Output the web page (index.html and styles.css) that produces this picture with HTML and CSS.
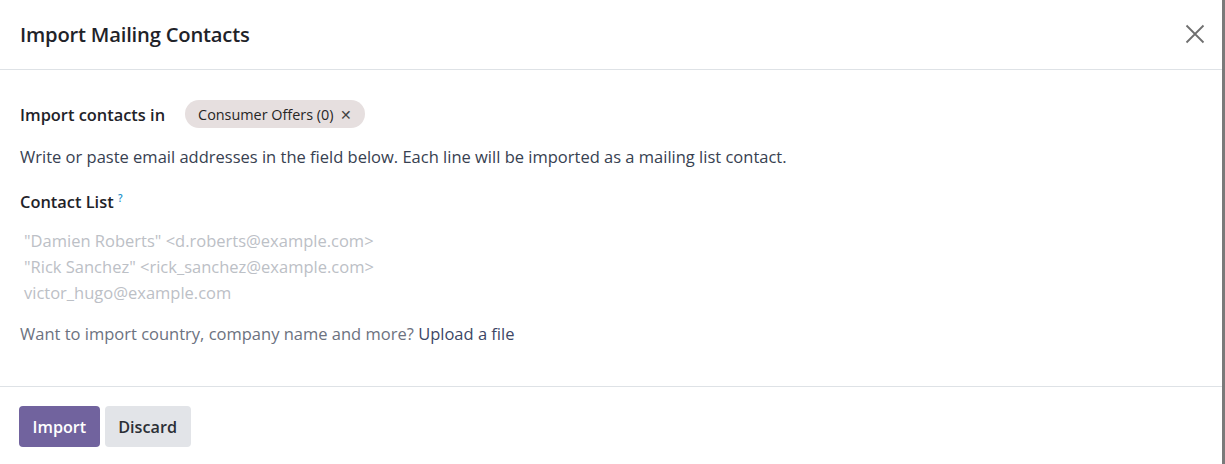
FILE: index.html
```html
<!DOCTYPE html>
<html lang="en">
<head>
<meta charset="utf-8">
<title>Import Mailing Contacts</title>
<link rel="stylesheet" href="styles.css">
</head>
<body>
<div class="modal">
  <header class="modal-header">
    <h4 class="modal-title">Import Mailing Contacts</h4>
    <button class="btn-close" aria-label="Close">
      <svg width="20" height="20" viewBox="0 0 20 20"><path d="M1.5 1.5L18.5 18.5M18.5 1.5L1.5 18.5" stroke="#6f6f6f" stroke-width="1.8" fill="none"/></svg>
    </button>
  </header>
  <main class="modal-body">
    <div class="row-in">
      <span class="label">Import contacts in</span>
      <span class="tag">Consumer Offers (0) <span class="tag-x">✕</span></span>
    </div>
    <p class="desc">Write or paste email addresses in the field below. Each line will be imported as a mailing list contact.</p>
    <div class="field-label">Contact List <sup class="help">?</sup></div>
    <div class="textarea">
      <div>"Damien Roberts" &lt;d.roberts@example.com&gt;</div>
      <div>"Rick Sanchez" &lt;rick_sanchez@example.com&gt;</div>
      <div>victor_hugo@example.com</div>
    </div>
    <p class="more">Want to import country, company name and more? <a class="link" href="#">Upload a file</a></p>
  </main>
  <footer class="modal-footer">
    <button class="btn btn-primary">Import</button>
    <button class="btn btn-secondary">Discard</button>
  </footer>
</div>
</body>
</html>
```
FILE: styles.css
```css
html, body {
  margin: 0;
  padding: 0;
  background: #fff;
}
body {
  font-family: "Open Sans", "Noto Sans", sans-serif;
  font-size: 16.5px;
  color: #374151;
  overflow: hidden;
}
.modal {
  width: 1225px;
  height: 480px;
  border-right: 3px solid #7a7a7a;
  box-sizing: border-box;
  background: #fff;
}
.modal-header {
  height: 70px;
  box-sizing: border-box;
  border-bottom: 1px solid #dee2e6;
  display: flex;
  align-items: center;
  justify-content: space-between;
  padding: 0 17px 1px 20px;
}
.modal-title {
  margin: 0;
  font-size: 20.2px;
  font-weight: 600;
  letter-spacing: -0.2px;
  color: #1f2329;
}
.btn-close {
  border: 0;
  background: none;
  padding: 0;
  display: flex;
  cursor: pointer;
}
.modal-body {
  padding: 30px 20px 0 20px;
  height: 317px;
  box-sizing: border-box;
  border-bottom: 1px solid #dee2e6;
}
.row-in {
  display: flex;
  align-items: center;
  gap: 20px;
  height: 28px;
}
.label, .field-label {
  font-weight: 600;
  color: #1f2329;
  font-size: 16.4px;
}
.tag {
  display: inline-flex;
  align-items: center;
  gap: 7px;
  height: 28px;
  padding: 0 13px 0 13px;
  border-radius: 14px;
  background: #e6dfdf;
  color: #262626;
  font-size: 14.4px;
}
.tag-x {
  font-size: 14px;
  color: #444;
}
.desc {
  margin: 16px 0 0 0;
  line-height: 26px;
}
.field-label {
  margin-top: 19px;
  line-height: 26px;
}
.help {
  color: #1a8fc9;
  font-size: 10px;
  font-weight: 600;
  vertical-align: top;
  position: relative;
  top: -4px;
}
.textarea {
  margin-top: 13px;
  padding-left: 4px;
  line-height: 26px;
  color: #bcc0c6;
}
.more {
  margin: 15px 0 0 0;
  line-height: 26px;
  color: #6c7280;
}
.link {
  color: #3d4766;
  text-decoration: none;
}
.modal-footer {
  display: flex;
  gap: 5px;
  padding: 19px 19px;
}
.btn {
  height: 41px;
  border: 0;
  border-radius: 4px;
  padding: 0 13.5px;
  font-family: inherit;
  font-size: 16.2px;
  font-weight: 600;
}
.btn-primary {
  background: #71639e;
  color: #fff;
}
.btn-secondary {
  background: #e2e4e8;
  color: #2b2f36;
}
```
